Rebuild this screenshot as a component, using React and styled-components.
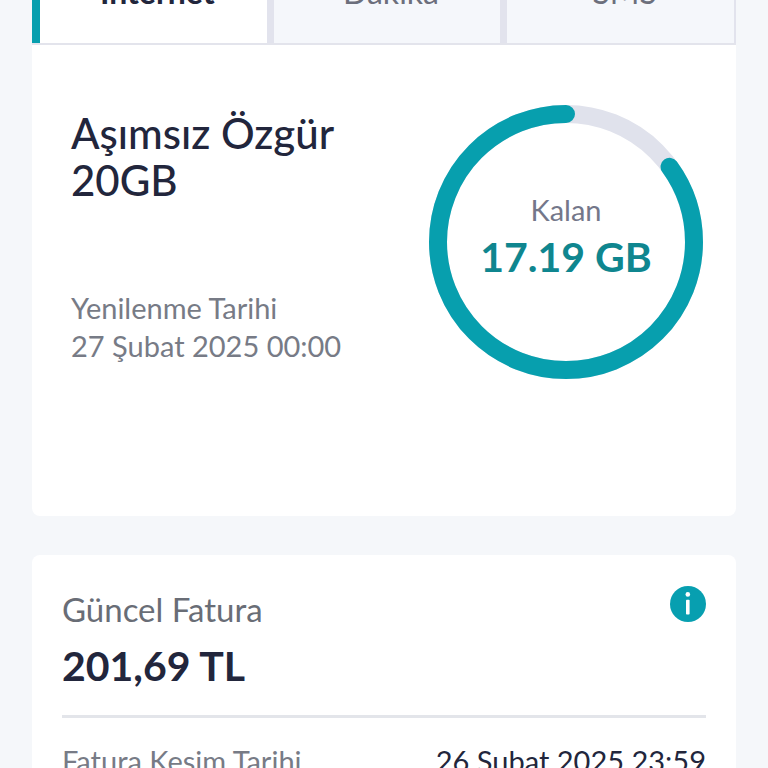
import styled, { createGlobalStyle } from 'styled-components';

const tabs = [
	{ id: 'internet', label: 'Internet' },
	{ id: 'dakika', label: 'Dakika' },
	{ id: 'sms', label: 'SMS' },
];

const App = () => {
	return (
		<>
			<GlobalStyle />
			<Screen>
				<Card>
					<TabList role="tablist">
						{tabs.map((tab, index) => (
							<Tab
								key={tab.id}
								type="button"
								role="tab"
								aria-selected={index === 0}
								$active={index === 0}
							>
								{tab.label}
							</Tab>
						))}
					</TabList>
					<Usage>
						<Plan>
							<h1>Aşımsız Özgür 20GB</h1>
							<p>
								Yenilenme Tarihi
								<br />
								27 Şubat 2025 00:00
							</p>
						</Plan>
						<UsageRing percent={85} label="Kalan" value="17.19 GB" />
					</Usage>
				</Card>

				<Card>
					<Bill>
						<BillHeader>
							<div>
								<BillTitle>Güncel Fatura</BillTitle>
								<Amount>201,69 TL</Amount>
							</div>
							<InfoButton type="button" aria-label="Bilgi">
								<svg width="36" height="36" viewBox="0 0 36 36">
									<circle cx="18" cy="18" r="18" fill="#079fb0" />
									<circle cx="17.8" cy="8.4" r="2.3" fill="#fff" />
									<rect x="16" y="13.8" width="3.6" height="14.8" rx="0.8" fill="#fff" />
								</svg>
							</InfoButton>
						</BillHeader>
						<BillRow>
							<dt>Fatura Kesim Tarihi</dt>
							<dd>26 Şubat 2025 23:59</dd>
						</BillRow>
					</Bill>
				</Card>
			</Screen>
		</>
	);
};

const UsageRing = ({ percent, label, value }) => (
	<Ring>
		<svg width="274" height="274" viewBox="0 0 274 274">
			<circle cx="137" cy="137" r="128" fill="none" stroke="#e0e2ec" strokeWidth="18" />
			<path
				d="M137 9A128 128 0 0 0 137 265A128 128 0 0 0 137 9"
				fill="none"
				stroke="#079fae"
				strokeWidth="18"
				strokeLinecap="round"
				pathLength="100"
				strokeDasharray={`${percent} 100`}
			/>
		</svg>
		<RingText>
			<span>{label}</span>
			<strong>{value}</strong>
		</RingText>
	</Ring>
);

export default App;

const GlobalStyle = createGlobalStyle`
	* {
		box-sizing: border-box;
		margin: 0;
		padding: 0;
	}

	body {
		background-color: #f5f7fa;
		font-family: Lato, sans-serif;
		color: #22263c;
	}

	button {
		font: inherit;
		border: none;
		background: none;
		cursor: pointer;
	}
`;

const Screen = styled.main`
	height: 100vh;
	overflow: hidden;
	padding: 0 32px;
	display: flex;
	flex-direction: column;
	gap: 39px;
`;

const Card = styled.section`
	flex-shrink: 0;
	background-color: #fff;
	border-radius: 8px;
`;

/* the strip is scrolled partly out of view */
const TabList = styled.div`
	display: flex;
	margin-top: -59px;
	height: 104px;
	border-bottom: 2px solid #e3e4ec;
`;

const Tab = styled.button`
	flex: 1 1 0;
	padding-left: 8px;
	font-size: 32px;
	line-height: 38px;
	font-weight: ${({ $active }) => ($active ? 700 : 400)};
	color: ${({ $active }) => ($active ? '#22263c' : '#6c6f7c')};
	background-color: ${({ $active }) => ($active ? '#fff' : '#f5f7fb')};
	border-left: ${({ $active }) => ($active ? '8px solid #079fae' : 'none')};
	border-right: 7px solid #e2e3ed;

	&:last-child {
		border-right-width: 2px;
	}
`;

const Usage = styled.div`
	display: flex;
	justify-content: space-between;
	align-items: flex-start;
	padding: 60px 33px 137px 39px;
`;

const Plan = styled.div`
	padding-top: 5px;

	h1 {
		max-width: 300px;
		font-size: 42px;
		line-height: 47px;
		font-weight: 500;
	}

	p {
		margin-top: 85px;
		font-size: 29px;
		line-height: 38px;
		color: #777b86;
	}
`;

const Ring = styled.div`
	display: grid;
	place-items: center;

	> * {
		grid-area: 1 / 1;
	}

	svg {
		display: block;
	}
`;

const RingText = styled.div`
	display: flex;
	flex-direction: column;
	align-items: center;
	padding-bottom: 17px;

	span {
		font-size: 29px;
		line-height: 46px;
		color: #74778a;
	}

	strong {
		font-size: 41px;
		line-height: 48px;
		color: #0f868f;
	}
`;

const Bill = styled.div`
	padding: 31px 30px;
`;

const BillHeader = styled.div`
	display: flex;
	justify-content: space-between;
	align-items: flex-start;
	padding-bottom: 25px;
	border-bottom: 3px solid #e3e5ea;
`;

const BillTitle = styled.h2`
	font-size: 33px;
	line-height: 46px;
	font-weight: 400;
	color: #696d76;
`;

const Amount = styled.p`
	margin-top: 10px;
	font-size: 41px;
	line-height: 48px;
	font-weight: 700;
`;

const InfoButton = styled.button`
	svg {
		display: block;
	}
`;

const BillRow = styled.dl`
	display: flex;
	justify-content: space-between;
	margin-top: 24px;
	font-size: 29px;
	line-height: 38px;

	dt {
		color: #777b86;
	}
`;
